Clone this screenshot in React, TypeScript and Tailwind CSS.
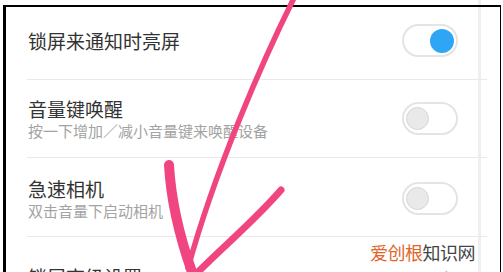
import { ChevronRight } from "lucide-react";

type SettingRow = {
  title: string;
  subtitle?: string;
  on?: boolean;
  heightClass: string;
};

const rows: SettingRow[] = [
  { title: "锁屏来通知时亮屏", on: true, heightClass: "h-[73px] pb-[5px]" },
  {
    title: "音量键唤醒",
    subtitle: "按一下增加／减小音量键来唤醒设备",
    heightClass: "h-[78px]",
  },
  {
    title: "急速相机",
    subtitle: "双击音量下启动相机",
    heightClass: "h-[79px] pt-[2px]",
  },
];

function Toggle({ on }: { on?: boolean }) {
  return (
    <div
      className={`flex h-[33px] w-[56px] items-center rounded-full border-2 border-[#e4e4e4] bg-white px-[2px] ${
        on ? "justify-end" : "justify-start"
      }`}
    >
      {on ? (
        <div className="size-[24px] rounded-full bg-[#2fa6f5]" />
      ) : (
        <div className="size-[23px] rounded-full border border-[#d6d6d6] bg-[#e9e9e9]" />
      )}
    </div>
  );
}

export default function App() {
  return (
    <div className="relative h-[272px] w-[503px] overflow-hidden bg-white pl-[3px] pt-[5px] font-['Noto_Sans_CJK_SC',sans-serif]">
      <div className="absolute left-[478px] top-0 h-[5px] w-[3px] bg-[#efefef]" />

      <div className="relative h-full w-[498px] border-l-[3px] border-r border-t-[2px] border-black">
        <div className="absolute left-[472px] top-0 h-full w-[3px] bg-[#efefef]" />

        <div className="relative ml-[21px] w-[460px]">
          {rows.map((row) => (
            <div
              className={`flex items-center justify-between border-b border-[#e9e9e9] pl-[1px] pr-[29px] ${row.heightClass}`}
              key={row.title}
            >
              <div>
                <p className="text-[19px] leading-[19px] text-[#333333]">{row.title}</p>
                {row.subtitle ? (
                  <p className="mt-[5px] text-[15px] leading-[15px] text-[#a3a3a3]">
                    {row.subtitle}
                  </p>
                ) : null}
              </div>
              <Toggle on={row.on} />
            </div>
          ))}

          <div className="flex h-[79px] items-center justify-between pl-[1px] pr-[27px]">
            <p className="text-[19px] leading-[19px] text-[#333333]">锁屏高级设置</p>
            <ChevronRight className="size-[22px] text-[#b8b8b8]" strokeWidth={1.5} />
          </div>
        </div>
      </div>

      <p className="absolute left-[370px] top-[241px] text-[18px] leading-[22px] tracking-[-0.5px]">
        <span className="text-[#e0662b]">爱创根</span>
        <span className="text-[#444444]">知识网</span>
      </p>

      <svg
        className="pointer-events-none absolute left-0 top-0"
        fill="none"
        height="272"
        stroke="#f04580"
        strokeLinecap="round"
        viewBox="0 0 503 272"
        width="503"
      >
        <path d="M294 -2 C262 62 215 170 188 268" strokeWidth="5.5" />
        <path d="M169 165 C171 200 180 238 192 272" strokeWidth="10" />
        <path d="M281 190 C255 220 225 245 198 272" strokeWidth="7" />
      </svg>
    </div>
  );
}
